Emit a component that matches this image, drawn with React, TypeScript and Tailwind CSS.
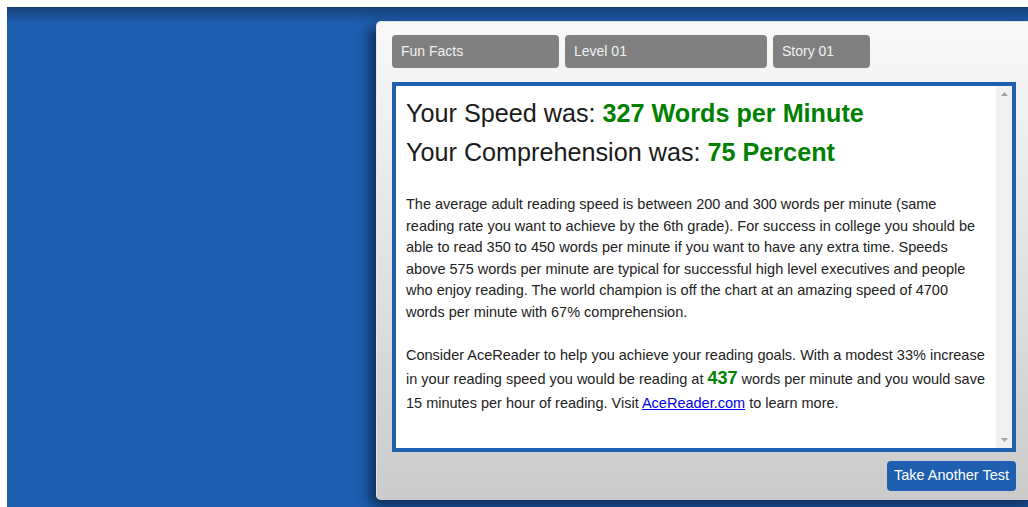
import React from 'react';

const tabs = [
  { label: 'Fun Facts', width: 'w-[167px]' },
  { label: 'Level 01', width: 'w-[202px]' },
  { label: 'Story 01', width: 'w-[97px]' },
];

// Small triangle used for the scrollbar arrows
const Arrow = ({ down = false }: { down?: boolean }) => (
  <svg width="7" height="4" viewBox="0 0 7 4" className="block">
    {down ? <path d="M0 0h7L3.5 4z" fill="#a3a3a3" /> : <path d="M3.5 0L7 4H0z" fill="#a3a3a3" />}
  </svg>
);

export default function App() {
  return (
    <div className="h-[507px] w-full bg-white pl-[7px] pt-[7px] font-['Liberation_Sans',Arial,sans-serif]">
      <div className="relative h-full w-full overflow-hidden bg-[#1e5fb0]">
        {/* top inset shading */}
        <div className="pointer-events-none absolute inset-x-0 top-0 h-[16px] bg-gradient-to-b from-[#163f78] to-transparent" />

        <div className="relative ml-[369px] mt-[14px] flex h-[479px] w-[664px] flex-col rounded-[5px] border-l border-t border-[#e6e6e6] bg-gradient-to-b from-[#f9f9f9] to-[#cbcbcb] pl-[15px] pt-[13px] shadow-[-6px_6px_14px_rgba(0,0,0,0.55)]">
          {/* Tab buttons */}
          <div className="flex gap-[6px]">
            {tabs.map((t) => (
              <div
                key={t.label}
                className={`${t.width} h-[33px] rounded-[4px] bg-[#808080] pl-[9px] text-[14px] leading-[33px] text-[#f0f0f0]`}
              >
                {t.label}
              </div>
            ))}
          </div>

          {/* Results box */}
          <div className="mt-[14px] flex h-[370px] w-[624px] border-[4px] border-[#1e5fb0] bg-white">
            <div className="flex-1 pl-[10px] pr-[8px] pt-[8px] text-[#1a1a1a]">
              <div className="text-[25.2px] leading-[39px]">
                Your Speed was: <span className="font-bold text-[#008000]">327 Words per Minute</span>
              </div>
              <div className="text-[25.2px] leading-[39px]">
                Your Comprehension was: <span className="font-bold text-[#008000]">75 Percent</span>
              </div>

              <p className="mt-[22px] text-[14.5px] leading-[21.6px] text-[#222]">
                The average adult reading speed is between 200 and 300 words per minute (same reading rate
                you want to achieve by the 6th grade). For success in college you should be able to read 350
                to 450 words per minute if you want to have any extra time. Speeds above 575 words per minute
                are typical for successful high level executives and people who enjoy reading. The world
                champion is off the chart at an amazing speed of 4700 words per minute with 67% comprehension.
              </p>

              <p className="mt-[19px] text-[14.5px] leading-[24px] text-[#222]">
                Consider AceReader to help you achieve your reading goals. With a modest 33% increase in your
                reading speed you would be reading at{' '}
                <span className="text-[18px] font-bold leading-none text-[#008000]">437</span> words per minute
                and you would save 15 minutes per hour of reading. Visit{' '}
                <a href="#" className="text-[#0000ee] underline">
                  AceReader.com
                </a>{' '}
                to learn more.
              </p>
            </div>

            {/* Scrollbar */}
            <div className="flex w-[16px] flex-col items-center justify-between bg-[#f1f1f1] py-[6px]">
              <Arrow />
              <Arrow down />
            </div>
          </div>

          <div className="mt-[9px] flex w-[624px] justify-end">
            <button className="h-[30px] w-[129px] rounded-[4px] bg-[#1e5fb0] text-[14.5px] text-white">
              Take Another Test
            </button>
          </div>
        </div>
      </div>
    </div>
  );
}
